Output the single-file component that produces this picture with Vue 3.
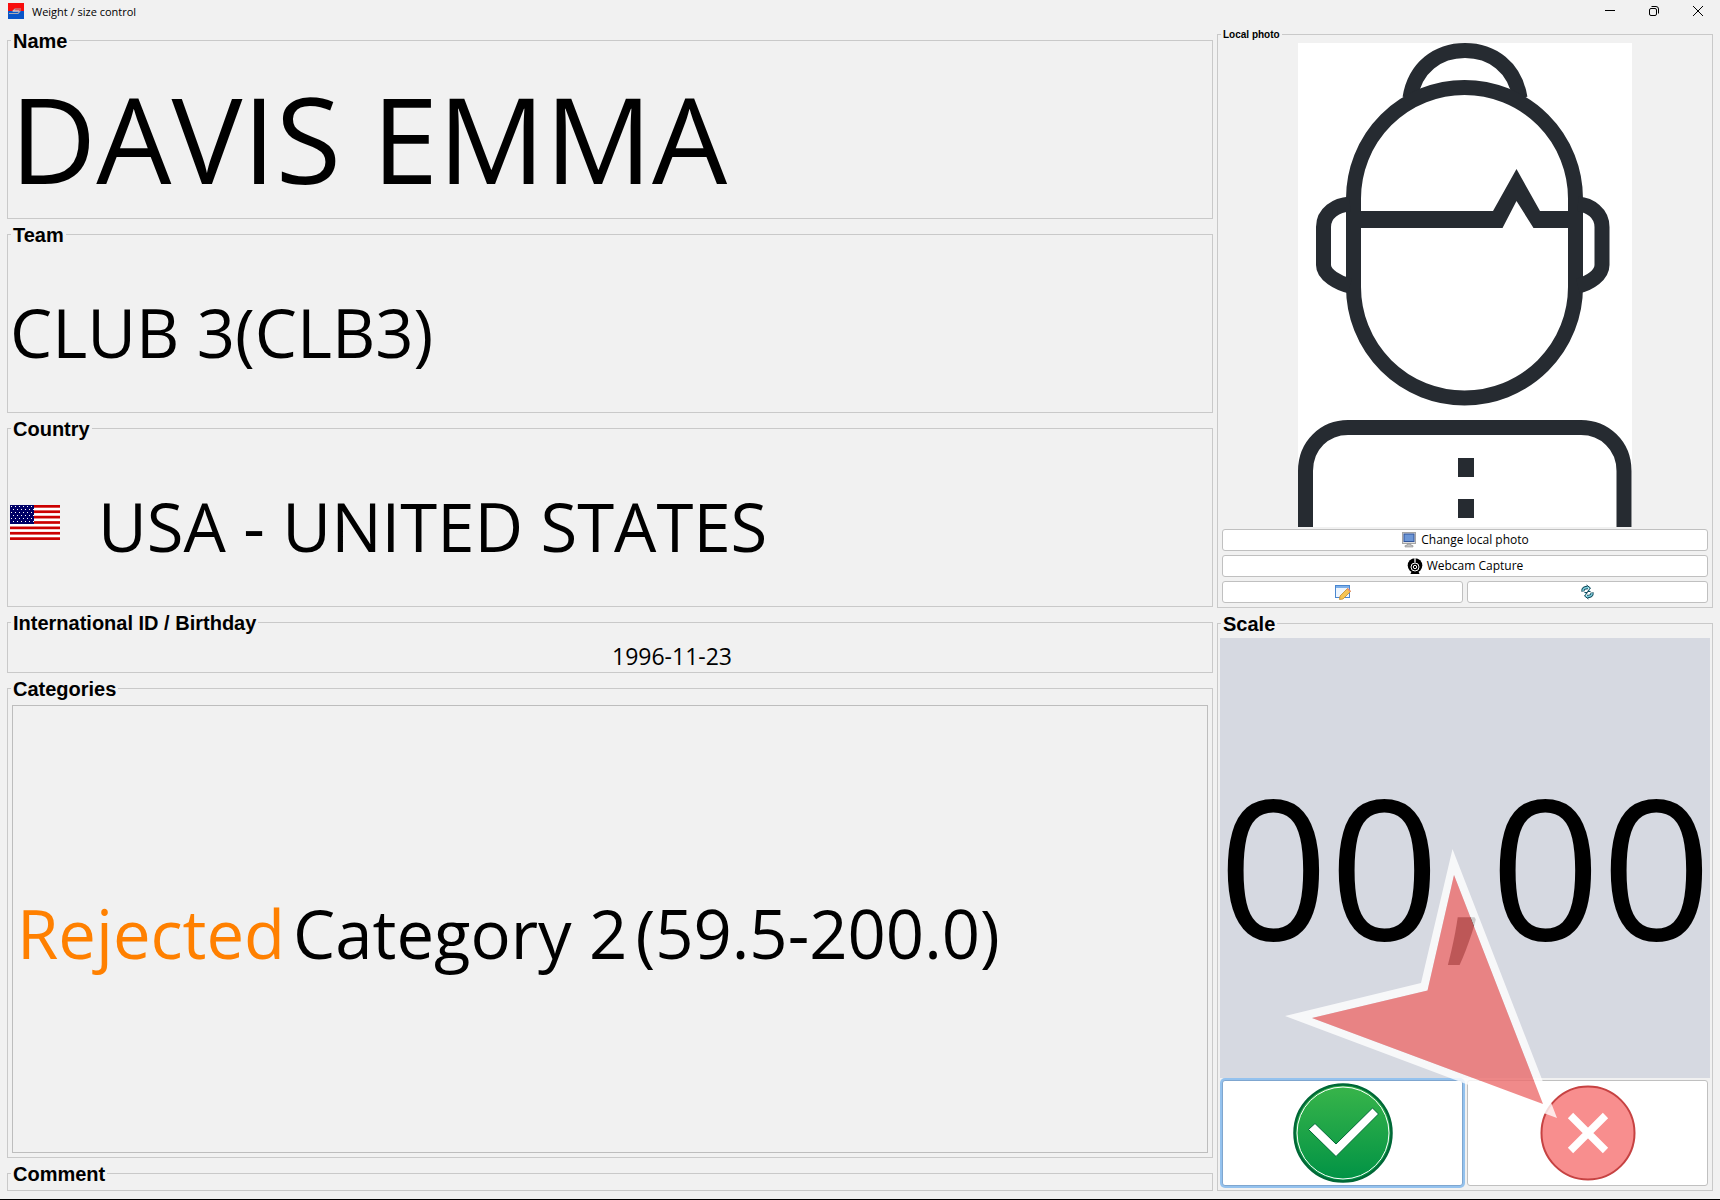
<script setup>
import { ref } from 'vue';

const athlete = {
    name: 'DAVIS EMMA',
    team: 'CLUB 3(CLB3)',
    country: 'USA - UNITED STATES',
    birthday: '1996-11-23',
};

const categories = [
    { id: 2, status: 'Rejected', name: 'Category 2', range: '(59.5-200.0)' },
];

const weight = ref('00,00');

// 7 red stripes on the flag
const stripes = [0, 1, 2, 3, 4, 5, 6];

const stars = [];
for (let r = 0; r < 6; r++) {
    for (let c = 0; c < 6; c++) {
        stars.push({ x: 1 + c * 4 + (r % 2) * 2, y: 1 + r * 3 });
    }
}
</script>

<template>
    <div class="window">
        <header class="titlebar">
            <svg class="logo" viewBox="0 0 16 16">
                <rect width="16" height="9" fill="#f80d0d" />
                <rect y="8" width="16" height="8" fill="#0a55c8" />
                <path d="M1 10.500h9l2-2.500H5l2-2h6" fill="none" stroke="#a9a9b4" stroke-width="1.2" />
                <path d="M5 8h6" stroke="#e8dcdc" stroke-width="1" />
            </svg>
            <h1>Weight / size control</h1>
            <div class="controls">
                <button type="button" aria-label="Minimize">
                    <svg viewBox="0 0 12 12"><path d="M1 5.5h10" /></svg>
                </button>
                <button type="button" aria-label="Restore">
                    <svg viewBox="0 0 12 12">
                        <rect x="1.5" y="3.5" width="7" height="7" rx="1.5" />
                        <path d="M3.5 1.5H8a2.5 2.5 0 0 1 2.5 2.5v4.5" />
                    </svg>
                </button>
                <button type="button" aria-label="Close">
                    <svg viewBox="0 0 12 12"><path d="M1 1l10 10M11 1L1 11" /></svg>
                </button>
            </div>
        </header>

        <main class="content">
            <div class="info">
                <fieldset>
                    <legend>Name</legend>
                    <div class="row"><span class="text huge">{{ athlete.name }}</span></div>
                </fieldset>
                <fieldset>
                    <legend>Team</legend>
                    <div class="row"><span class="text big">{{ athlete.team }}</span></div>
                </fieldset>
                <fieldset>
                    <legend>Country</legend>
                    <div class="row country">
                        <svg class="flag" viewBox="0 0 50 35">
                            <rect width="50" height="35" fill="#fff" />
                            <rect v-for="s in stripes" :key="s" width="50" height="2.7" :y="s * 5.38" fill="#cc0000" />
                            <rect width="24" height="19" fill="#000066" />
                            <rect v-for="(s, i) in stars" :key="i" :x="s.x" :y="s.y" width="1" height="1" fill="#fff" />
                        </svg>
                        <span class="text big">{{ athlete.country }}</span>
                    </div>
                </fieldset>
                <fieldset>
                    <legend>International ID / Birthday</legend>
                    <div class="row birthday"><span class="text medium">{{ athlete.birthday }}</span></div>
                </fieldset>
                <fieldset>
                    <legend>Categories</legend>
                    <div class="categories">
                        <div class="category" v-for="c in categories" :key="c.id">
                            <span class="text big rejected">{{ c.status }}</span>
                            <span class="text big">{{ c.name }}</span>
                            <span class="text big">{{ c.range }}</span>
                        </div>
                    </div>
                </fieldset>
                <fieldset>
                    <legend>Comment</legend>
                </fieldset>
            </div>

            <div class="side">
                <fieldset class="photo-box">
                    <legend class="small">Local photo</legend>
                    <div class="photo-body">
                        <svg class="photo" viewBox="0 0 334 484" role="img" aria-label="Local photo">
                            <rect width="334" height="484" fill="#fff" />
                            <g fill="none" stroke="#262b31" stroke-width="15">
                                <path d="M112 55C117 24 140 7.5 167 7.5S217 24 222 55" />
                                <rect x="55.5" y="44.5" width="222" height="310.500" rx="111" />
                                <path d="M52 161C38 162 25.500 170 25.500 184V222C25.500 232 40 240 52 243" />
                                <path d="M280 161C292 162 304 170 304 184V222C304 232 292 240 280 243" />
                                <path d="M7.500 484V428C7.500 402 27 384.500 50 384.500H283C306 384.500 326 402 326 428V484" />
                            </g>
                            <g fill="#262b31">
                                <path d="M60 168H195L218.500 126L242 168H272V185H235.500L218.500 158L204.500 185H60Z" />
                                <rect x="160" y="415" width="16" height="19" />
                                <rect x="160" y="456" width="16" height="19" />
                            </g>
                        </svg>
                        <button type="button" class="btn">
                            <svg class="icon" viewBox="0 0 16 16">
                                <rect x="1.500" y=".5" width="13" height="11" fill="#dcdcdc" stroke="#a5a5a5" />
                                <rect x="3" y="2" width="10" height="7.500" fill="#6c96d6" stroke="#31559b" />
                                <path d="M6 12h4v1.500h2V15H4v-1.500h2z" fill="#c4c4c4" stroke="#8e8e8e" stroke-width=".6" />
                            </svg>
                            Change local photo
                        </button>
                        <button type="button" class="btn">
                            <svg class="icon" viewBox="0 0 16 16">
                                <circle cx="8" cy="7.500" r="7.300" />
                                <path d="M3.500 16l1-2.500h7l1 2.500z" />
                                <path d="M8 0v4.500" stroke="#ddd" stroke-width="1.500" />
                                <circle cx="8" cy="9" r="4" fill="none" stroke="#fff" />
                                <circle cx="8" cy="9" r="1.700" fill="none" stroke="#fff" />
                            </svg>
                            Webcam Capture
                        </button>
                        <div class="pair">
                            <button type="button" class="btn" aria-label="Edit photo">
                                <svg class="icon" viewBox="0 0 16 16">
                                    <rect x=".5" y="1.500" width="14" height="12" fill="#eef5fd" stroke="#4a86cf" />
                                    <path d="M1 3h13" stroke="#7db0ea" stroke-width="2" />
                                    <path d="M5 12L12.500 4.500l3 3L8 15l-3.500.5z" fill="#f6c453" stroke="#c58a2a" stroke-width=".8" />
                                    <path d="M12.500 4.500l3 3" stroke="#e88a72" stroke-width="1.500" />
                                </svg>
                            </button>
                            <button type="button" class="btn" aria-label="Refresh photo">
                                <svg class="icon" viewBox="0 0 16 16">
                                    <path d="M3 7.500C2.500 4.500 4.500 3.500 8 3.500M12 8.500C12.500 11.500 10.500 12.500 7 12.500" fill="none" stroke="#134a5c" stroke-width="3.400" />
                                    <path d="M6.500 1L10.500 4L7.500 7.500H10.500M8.500 15L4.500 12L7.500 8.500H4.500" fill="#7fd0de" stroke="#134a5c" />
                                    <path d="M3 7C2.800 4.500 4.500 3.500 8 3.500M12 9C12.200 11.500 10.500 12.500 7 12.500" fill="none" stroke="#7fd0de" stroke-width="1.400" />
                                </svg>
                            </button>
                        </div>
                    </div>
                </fieldset>

                <fieldset class="scale-box">
                    <legend>Scale</legend>
                    <div class="scale-body">
                        <div class="display">
                            <output class="weight">{{ weight }}</output>
                            <svg class="pointer" viewBox="0 0 272 269" aria-hidden="true">
                                <path fill="rgba(255,255,255,.8)" fill-rule="evenodd"
                                    d="M167.500 0L272 269L0 167L136 134ZM169 26L142.500 141.500L27 169L258 255Z" />
                                <path fill="rgba(236,109,109,.8)" d="M169 26L142.500 141.500L27 169L258 255Z" />
                            </svg>
                        </div>
                        <div class="pair">
                            <button type="button" class="btn action focused" aria-label="Accept">
                                <svg viewBox="0 0 100 100">
                                    <defs>
                                        <linearGradient id="ok" x1="0" y1="0" x2="0" y2="1">
                                            <stop offset="0" stop-color="#39b54a" />
                                            <stop offset="1" stop-color="#009245" />
                                        </linearGradient>
                                    </defs>
                                    <circle cx="50" cy="50" r="48.500" fill="url(#ok)" stroke="#006837" stroke-width="2.500" />
                                    <circle cx="50" cy="50" r="46" fill="none" stroke="#fff" stroke-width="1" />
                                    <path d="M15.500 46.500L22 40.500L43 61L79.500 25L85.500 31L43 73.500Z" fill="#fff" stroke="#006837" />
                                </svg>
                            </button>
                            <button type="button" class="btn action" aria-label="Reject">
                                <svg viewBox="0 0 100 100">
                                    <circle cx="50" cy="50" r="46.500" fill="#f88e8e" stroke="#c64242" stroke-width="2" />
                                    <path d="M32.500 32.500l35 35M67.500 32.500l-35 35" stroke="#fff" stroke-width="7.500" />
                                </svg>
                            </button>
                        </div>
                    </div>
                </fieldset>
            </div>
        </main>
    </div>
</template>

<style>
body {
    margin: 0;
    background: #f1f1f1;
}
</style>

<style scoped>
.window {
    display: flex;
    flex-direction: column;
    box-sizing: border-box;
    min-height: 100vh;
    background: #f1f1f1;
    border-bottom: 1px solid #000;
    font-family: "Open Sans", "Noto Sans", sans-serif;
    color: #000;
}

.titlebar {
    display: flex;
    align-items: center;
    height: 22px;
    padding-left: 8px;
    gap: 8px;
}

.logo {
    width: 16px;
    height: 16px;
}

h1 {
    margin: 0;
    font-size: 11px;
    font-weight: 400;
}

.controls {
    display: flex;
    margin-left: auto;
}

.controls button {
    display: flex;
    align-items: center;
    justify-content: center;
    width: 44px;
    height: 22px;
    padding: 0;
    border: none;
    background: transparent;
}

.controls svg {
    width: 12px;
    height: 12px;
    fill: none;
    stroke: #000;
}

.content {
    flex: 1;
    display: grid;
    grid-template-columns: minmax(0, 1206fr) minmax(0, 496fr);
    gap: 4px;
    padding: 0 7px 8px;
}

.info {
    display: grid;
    grid-template-rows: 189fr 189fr 189fr 61px 480fr 28px;
    gap: 5px;
    padding-top: 8px;
}

.side {
    display: grid;
    grid-template-rows: 580fr 578fr;
    gap: 5px;
    padding-top: 6px;
}

fieldset {
    display: flex;
    flex-direction: column;
    box-sizing: border-box;
    min-width: 0;
    margin: 0;
    padding: 0;
    border: 1px solid #c9c9c9;
}

legend {
    margin-left: 3px;
    padding: 2px 2px 0;
    font: bold 20px/18px "Liberation Sans", Arial, sans-serif;
}

legend.small {
    font-size: 10px;
    line-height: 10px;
}

.row {
    flex: 1;
    display: flex;
    align-items: center;
    padding-left: 2px;
}

.row.birthday {
    justify-content: center;
    padding-left: 124px;
}

.country {
    gap: 38px;
}

.flag {
    width: 50px;
    height: 35px;
}

.text {
    padding-top: 8px;
    line-height: 1;
    white-space: nowrap;
}

.huge {
    font-size: 119px;
}

.big {
    font-size: 67px;
}

.medium {
    font-size: 23px;
}

.categories {
    flex: 1;
    display: flex;
    flex-direction: column;
    justify-content: center;
    margin: 7px 4px 4px;
    border: 1px solid #bdbdbd;
}

.category {
    display: flex;
    gap: 8px;
    padding-left: 4px;
}

.rejected {
    color: #ff8000;
}

.photo-body {
    flex: 1;
    display: flex;
    flex-direction: column;
    gap: 4px;
    padding: 3px 4px 4px;
}

/* takes the room the buttons leave, never asks for its own height */
.photo {
    flex: 1 1 0px;
    contain: size;
    width: 100%;
    min-height: 0;
    margin-bottom: -2px;
}

.pair {
    display: grid;
    grid-template-columns: 1fr 1fr;
    gap: 4px;
}

.btn {
    display: flex;
    align-items: center;
    justify-content: center;
    gap: 4px;
    height: 22px;
    padding: 0;
    border: 1px solid #c0c0c0;
    border-radius: 3px;
    background: #fff;
    color: #000;
    font-family: inherit;
    font-size: 12px;
    line-height: 16px;
}

.icon {
    width: 16px;
    height: 16px;
}

.scale-body {
    flex: 1;
    display: flex;
    flex-direction: column;
    gap: 2px;
    padding: 5px 2px 4px;
}

.scale-body .pair {
    padding: 0 2px;
}

.display {
    flex: 1;
    position: relative;
    display: flex;
    align-items: center;
    justify-content: center;
    background: #d6d9e1;
}

.weight {
    padding-top: 14px;
    font-size: 194px;
    line-height: 1;
    white-space: nowrap;
}

.pointer {
    position: absolute;
    z-index: 1;
    left: 65px;
    top: 211px;
    width: 272px;
    height: 269px;
    pointer-events: none;
}

.action {
    height: 106px;
}

.action svg {
    width: 100px;
    height: 100px;
}

.focused {
    border-color: #7fa6cf;
    box-shadow: 0 0 0 2px #94c2ee;
}
</style>
